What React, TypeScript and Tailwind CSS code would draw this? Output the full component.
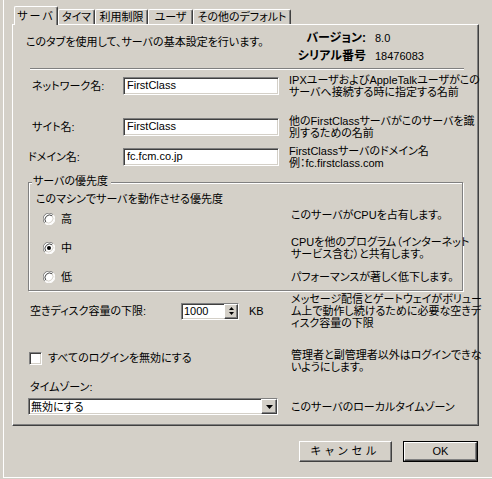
import type { ReactNode } from "react";

const raised =
  "border border-t-white border-l-white border-r-[#404040] border-b-[#404040] shadow-[inset_-1px_-1px_0_#808080]";
const sunken =
  "border border-t-[#808080] border-l-[#808080] border-r-white border-b-white shadow-[inset_1px_1px_0_#404040,inset_-1px_-1px_0_#d4d0c8]";

function Radio({ checked }: { checked?: boolean }) {
  return (
    <svg width="12" height="12" viewBox="0 0 12 12" className="shrink-0">
      <circle cx="6" cy="6" r="5.5" fill="#fff" />
      <path d="M10.2 1.8 A5.9 5.9 0 0 0 1.8 10.2" fill="none" stroke="#808080" strokeWidth="1" />
      <path d="M1.8 10.2 A5.9 5.9 0 0 0 10.2 1.8" fill="none" stroke="#fff" strokeWidth="1" />
      <path d="M9.2 2.8 A4.6 4.6 0 0 0 2.8 9.2" fill="none" stroke="#404040" strokeWidth="1" />
      <path d="M2.8 9.2 A4.6 4.6 0 0 0 9.2 2.8" fill="none" stroke="#d4d0c8" strokeWidth="1" />
      {checked && <circle cx="6" cy="6" r="2" fill="#000" />}
    </svg>
  );
}

function TextBox({ value }: { value: string }) {
  return (
    <div className={`${sunken} h-[18px] w-[156px] shrink-0 bg-white pl-[3px] text-[11px] leading-[15px]`}>
      {value}
    </div>
  );
}

function Desc({ children, className = "" }: { children: ReactNode; className?: string }) {
  return <div className={`shrink-0 whitespace-nowrap leading-[12px] ${className}`}>{children}</div>;
}

function Tab({ label, w }: { label: string; w: string }) {
  return (
    <div
      className={`${w} h-[15px] shrink-0 whitespace-nowrap border-t border-l border-r border-t-white border-l-white border-r-[#404040] shadow-[inset_-1px_0_0_#808080] rounded-t-[2px] text-center leading-[14px]`}
    >
      {label}
    </div>
  );
}

export default function App() {
  return (
    <div className="w-[492px] h-[479px] bg-[#d4d0c8] text-black text-[11px] font-['Liberation_Sans','Noto_Sans_CJK_JP',sans-serif] [font-feature-settings:'palt']">
      <div className="ml-[3px] h-[478px] border-l border-b border-white flex flex-col">
        {/* tabs */}
        <div className="flex items-end h-[24px] pl-[10px]">
          <div className="relative z-10 -mb-px h-[19px] w-[44px] shrink-0 border-t border-l border-r border-t-white border-l-white border-r-[#404040] shadow-[inset_-1px_0_0_#808080] rounded-t-[2px] bg-[#d4d0c8] pt-[2px] text-center leading-[14px] tracking-[2px]">
            サーバ
          </div>
          <Tab label="タイマ" w="w-[37px]" />
          <Tab label="利用制限" w="w-[53px]" />
          <Tab label="ユーザ" w="w-[45px]" />
          <Tab label="その他のデフォルト" w="w-[98px]" />
        </div>

        {/* panel */}
        <div className={`ml-[8px] w-[467px] h-[402px] shrink-0 ${raised}`}>
          <div className="ml-[13px] w-[438px]">
            <div className="flex h-[40px]">
              <div className="mt-[10px] shrink-0 whitespace-nowrap leading-[14px]">
                このタブを使用して、サーバの基本設定を行います。
              </div>
              <div className="ml-auto mr-[29px] shrink-0 pt-[4px]">
                <div className="flex h-[18px] items-center">
                  <div className="w-[100px] text-right text-[12px] font-bold">バージョン:</div>
                  <div className="ml-[9px] w-[60px] text-[11px]">8.0</div>
                </div>
                <div className="flex h-[18px] items-center">
                  <div className="w-[100px] text-right text-[12px] font-bold">シリアル番号</div>
                  <div className="ml-[9px] w-[60px] text-[11px]">18476083</div>
                </div>
              </div>
            </div>

            <div className="mt-[3px] ml-[4px] w-[434px] h-[2px] border-t border-b border-t-[#808080] border-b-white" />

            <div className="mt-[4px] flex h-[24px] items-center">
              <div className="w-[97px] shrink-0 whitespace-nowrap pl-[6px]">ネットワーク名:</div>
              <TextBox value="FirstClass" />
              <Desc className="ml-[10px]">
                IPXユーザおよびAppleTalkユーザがこの
                <br />
                サーバへ接続する時に指定する名前
              </Desc>
            </div>

            <div className="mt-[17px] flex h-[24px] items-center">
              <div className="w-[97px] shrink-0 whitespace-nowrap pl-[6px]">サイト名:</div>
              <TextBox value="FirstClass" />
              <Desc className="ml-[10px]">
                他のFirstClassサーバがこのサーバを識
                <br />
                別するための名前
              </Desc>
            </div>

            <div className="mt-[6px] flex h-[24px] items-center">
              <div className="w-[97px] shrink-0 whitespace-nowrap pl-[2px]">ドメイン名:</div>
              <TextBox value="fc.fcm.co.jp" />
              <Desc className="ml-[10px]">
                FirstClassサーバのドメイン名
                <br />
                例：fc.firstclass.com
              </Desc>
            </div>

            {/* priority group */}
            <div className="mt-[13px] ml-[2px] w-[435px] border border-[#808080] shadow-[inset_1px_1px_0_#fff,1px_1px_0_#fff] pb-[1px]">
              <div className="-mt-[9px] ml-[3px] w-fit bg-[#d4d0c8] pl-[1px] pr-[3px] leading-[14px]">サーバの優先度</div>
              <div className="mt-[4px] pl-[7px] leading-[14px]">このマシンでサーバを動作させる優先度</div>

              <div className="mt-[1px] flex h-[24px] items-center">
                <div className="flex w-[262px] shrink-0 items-center pl-[14px]">
                  <Radio />
                  <span className="ml-[6px]">高</span>
                </div>
                <Desc className="mb-[8px]">このサーバがCPUを占有します。</Desc>
              </div>

              <div className="mt-[5px] flex h-[24px] items-center">
                <div className="flex w-[262px] shrink-0 items-center pl-[14px]">
                  <Radio checked />
                  <span className="ml-[6px]">中</span>
                </div>
                <Desc>
                  CPUを他のプログラム（インターネット
                  <br />
                  サービス含む）と共有します。
                </Desc>
              </div>

              <div className="mt-[5px] flex h-[24px] items-center">
                <div className="flex w-[262px] shrink-0 items-center pl-[14px]">
                  <Radio />
                  <span className="ml-[6px]">低</span>
                </div>
                <Desc>パフォーマンスが著しく低下します。</Desc>
              </div>
            </div>

            {/* disk */}
            <div className="mt-[2px] flex items-center">
              <div className="flex w-[265px] shrink-0 items-center">
                <div className="w-[155px] shrink-0 whitespace-nowrap pl-[4px]">空きディスク容量の下限:</div>
                <div className={`${sunken} flex h-[17px] w-[58px] shrink-0 items-center bg-white`}>
                  <span className="flex-1 pl-[2px] text-[11px] leading-[15px]">1000</span>
                  <div className={`${raised} flex h-[15px] w-[14px] flex-col items-center justify-center gap-[2px] bg-[#d4d0c8]`}>
                    <svg width="5" height="3" viewBox="0 0 5 3">
                      <path d="M2.5 0 L5 3 L0 3 Z" fill="#000" />
                    </svg>
                    <svg width="5" height="3" viewBox="0 0 5 3">
                      <path d="M0 0 L5 0 L2.5 3 Z" fill="#000" />
                    </svg>
                  </div>
                </div>
                <span className="ml-[10px] shrink-0 text-[11px]">KB</span>
              </div>
              <Desc>
                メッセージ配信とゲートウェイがボリュー
                <br />
                ム上で動作し続けるために必要な空きデ
                <br />
                ィスク容量の下限
              </Desc>
            </div>

            {/* disable logins */}
            <div className="mt-[20px] flex items-start">
              <div className="flex w-[265px] shrink-0 items-center pt-[2px] pl-[3px]">
                <div className={`${sunken} h-[13px] w-[13px] shrink-0 bg-white`} />
                <span className="ml-[6px] whitespace-nowrap leading-[14px]">すべてのログインを無効にする</span>
              </div>
              <Desc>
                管理者と副管理者以外はログインできな
                <br />
                いようにします。
              </Desc>
            </div>

            {/* timezone */}
            <div className="mt-[7px] pl-[4px] leading-[14px]">タイムゾーン:</div>
            <div className="mt-[4px] flex items-center">
              <div className={`${sunken} ml-[2px] flex h-[17px] w-[250px] shrink-0 items-center bg-white`}>
                <span className="flex-1 pl-[2px] leading-[14px]">無効にする</span>
                <div className={`${raised} flex h-[15px] w-[16px] items-center justify-center bg-[#d4d0c8]`}>
                  <svg width="7" height="4" viewBox="0 0 7 4">
                    <path d="M0 0 L7 0 L3.5 4 Z" fill="#000" />
                  </svg>
                </div>
              </div>
              <Desc className="ml-[13px]">このサーバのローカルタイムゾーン</Desc>
            </div>
          </div>
        </div>

        {/* buttons */}
        <div className="mt-[15px] ml-[295px] flex gap-[11px]">
          <button className={`${raised} h-[21px] w-[93px] bg-[#d4d0c8] tracking-[4px] leading-[17px]`}>
            キャンセル
          </button>
          <div className="h-[21px] w-[75px] border border-black">
            <button className={`${raised} h-full w-full bg-[#d4d0c8] text-[11px] leading-[15px]`}>OK</button>
          </div>
        </div>
      </div>
    </div>
  );
}
